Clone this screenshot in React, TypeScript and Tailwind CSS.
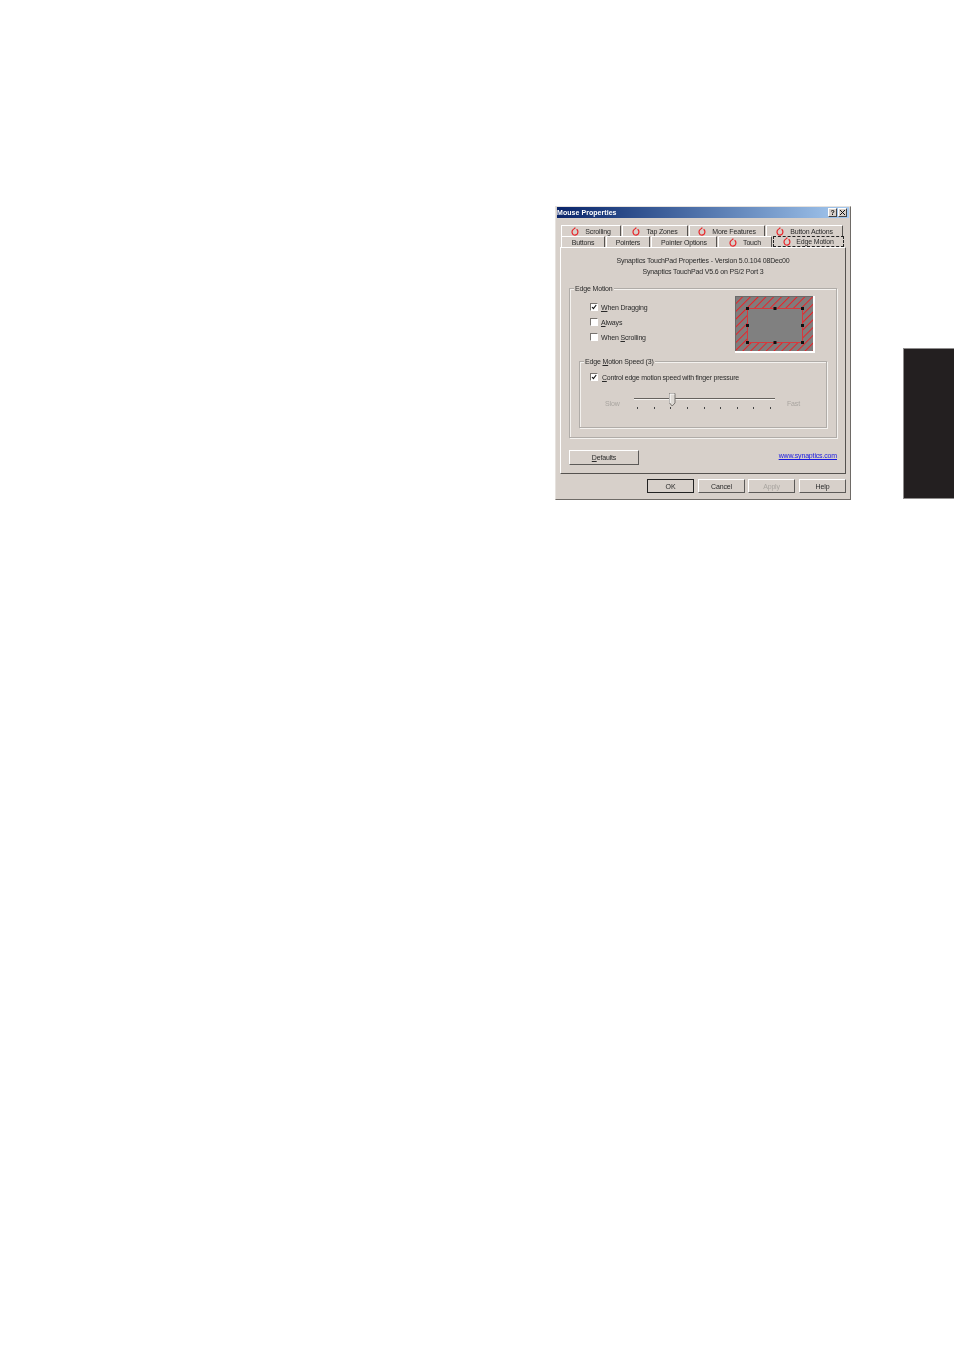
import { FC, ReactNode } from 'react'

const Swirl: FC = () => (
  <svg width="8" height="9" viewBox="0 0 8 9" fill="none" className="shrink-0">
    <path
      d="M4.4 0.7 C3.6 1.5 2.4 2.2 1.6 3.2 C0.6 4.6 1 6.8 2.4 7.7 C3.9 8.5 5.8 7.9 6.5 6.4 C7.2 4.9 6.8 3.3 5.6 2.3"
      stroke="#e8262a"
      strokeWidth="1.2"
    />
  </svg>
)

interface TabProps {
  className: string
  label: string
  icon?: boolean
}

const Tab: FC<TabProps> = ({ className, label, icon }) => (
  <div
    className={`flex h-[11px] items-center justify-center gap-[6px] rounded-t-[1px] border-t border-l border-r border-t-white border-l-white border-r-[#55524f] ${className}`}
  >
    {icon && <Swirl />}
    <span>{label}</span>
  </div>
)

const Check: FC<{ on?: boolean; children: ReactNode; className?: string }> = ({
  on,
  children,
  className,
}) => (
  <div className={`flex h-[8px] items-center gap-[3px] ${className ?? ''}`}>
    <div className="h-[8px] w-[8px] shrink-0 border border-t-[#77736f] border-l-[#77736f] border-r-white border-b-white bg-white">
      {on && (
        <svg viewBox="0 0 6 6" className="h-[6px] w-[6px]" fill="none">
          <path d="M1 3 L2.4 4.6 L5.2 1" stroke="#111" strokeWidth="1.1" />
        </svg>
      )}
    </div>
    <span>{children}</span>
  </div>
)

const Button: FC<{ className: string; children: ReactNode }> = ({
  className,
  children,
}) => (
  <div
    className={`flex items-center justify-center border border-t-white border-l-white border-r-[#5c5a58] border-b-[#5c5a58] ${className}`}
  >
    {children}
  </div>
)

const Group: FC<{
  className: string
  legend: ReactNode
  children: ReactNode
}> = ({ className, legend, children }) => (
  <div
    className={`relative border border-[#b0aca8] shadow-[1px_1px_0_#f4f2ef,inset_1px_1px_0_#f4f2ef] ${className}`}
  >
    <span className="absolute top-[-6px] left-[4px] h-[11px] bg-[#d7d0ca] px-[1px] leading-[11px]">
      {legend}
    </span>
    {children}
  </div>
)

const Preview: FC = () => (
  <svg width="80" height="57" viewBox="0 0 80 57" className="shrink-0">
    <defs>
      <pattern
        id="hatch"
        width="5.5"
        height="5.5"
        patternUnits="userSpaceOnUse"
        patternTransform="rotate(45)"
      >
        <rect width="5.5" height="5.5" fill="#807c7c" />
        <rect width="1" height="5.5" fill="#ec2026" />
      </pattern>
    </defs>
    <rect width="80" height="57" fill="#fff" />
    <rect width="78" height="55" fill="#6a6a6a" />
    <rect x="1" y="1" width="77" height="54" fill="url(#hatch)" />
    <rect x="12.5" y="12.5" width="55" height="34" fill="#808080" stroke="#d8383c" />
    {[12.5, 40, 67.5].map((x) =>
      [12.5, 29.5, 46.5].map((y) =>
        x === 40 && y === 29.5 ? null : (
          <rect key={`${x}-${y}`} x={x - 1.5} y={y - 1.5} width="3" height="3" fill="#111" />
        ),
      ),
    )}
  </svg>
)

const ticks = [0, 1, 2, 3, 4, 5, 6, 7, 8]

export default function App() {
  return (
    <div className="flex h-[1351px] w-[954px] items-start overflow-hidden bg-white pt-[206px] pl-[555px] font-['Liberation_Sans',Arial,sans-serif] text-[7px] leading-[11px] tracking-[-0.16px] text-[#2a2a2a]">
      <div className="h-[294px] w-[296px] shrink-0 border border-t-[#e6e2de] border-l-[#e6e2de] border-r-[#6e6a66] border-b-[#6e6a66] bg-[#d7d0ca] blur-[0.25px]">
        <div className="mx-[1px] flex h-[11px] items-center justify-between bg-gradient-to-r from-[#0a246a] to-[#a6caf0] pr-[2px] text-white">
          <span className="font-bold tracking-[0.05px]">Mouse Properties</span>
          <div className="flex gap-[1px] text-[#111]">
            <div className="flex h-[9px] w-[9px] items-center justify-center border border-t-white border-l-white border-r-[#444] border-b-[#444] bg-[#d7d0ca] text-[7px] font-bold">
              ?
            </div>
            <div className="flex h-[9px] w-[9px] items-center justify-center border border-t-white border-l-white border-r-[#444] border-b-[#444] bg-[#d7d0ca]">
              <svg width="5" height="5" viewBox="0 0 5 5" stroke="#111" strokeWidth="1">
                <path d="M0 0 L5 5 M5 0 L0 5" />
              </svg>
            </div>
          </div>
        </div>

        <div className="mt-[7px] ml-[5px] flex gap-[1px]">
          <Tab className="w-[60px]" icon label="Scrolling" />
          <Tab className="w-[66px]" icon label="Tap Zones" />
          <Tab className="w-[76px]" icon label="More Features" />
          <Tab className="w-[77px]" icon label="Button Actions" />
        </div>
        <div className="ml-[5px] flex items-end gap-[1px]">
          <Tab className="w-[44px]" label="Buttons" />
          <Tab className="w-[44px]" label="Pointers" />
          <Tab className="w-[66px]" label="Pointer Options" />
          <Tab className="w-[54px]" icon label="Touch" />
          <div className="mt-[-1px] flex h-[11px] w-[71px] items-center justify-center gap-[5px] border border-dashed border-[#222]">
            <Swirl />
            <span>Edge Motion</span>
          </div>
        </div>

        <div className="ml-[4px] h-[227px] w-[286px] border border-t-white border-l-white border-r-[#55524f] border-b-[#55524f] pt-[7px]">
          <p className="text-center">Synaptics TouchPad Properties - Version 5.0.104 08Dec00</p>
          <p className="text-center">Synaptics TouchPad V5.6 on PS/2 Port 3</p>

          <Group className="mt-[11px] ml-[8px] h-[150px] w-[268px]" legend="Edge Motion">
            <div className="flex items-start justify-between pt-[7px] pr-[21px] pl-[20px]">
              <div className="mt-[7px] flex flex-col gap-[7px]">
                <Check on>
                  <u>W</u>hen Dragging
                </Check>
                <Check>
                  <u>A</u>lways
                </Check>
                <Check>
                  When <u>S</u>crolling
                </Check>
              </div>
              <Preview />
            </div>

            <Group
              className="mt-[8px] ml-[9px] h-[67px] w-[248px]"
              legend={
                <>
                  Edge <u>M</u>otion Speed (3)
                </>
              }
            >
              <Check on className="mt-[11px] ml-[10px] !gap-[4px] tracking-[-0.22px]">
                <u>C</u>ontrol edge motion speed with finger pressure
              </Check>
              <div className="mt-[11px] flex items-start pl-[25px] text-[#a9a5a0]">
                <span className="mt-[6px] w-[29px]">Slow</span>
                <div className="relative h-[20px] w-[141px]">
                  <div className="mt-[6px] h-[2px] border-t border-t-[#66625e] bg-[#f4f2ef]" />
                  <div className="mt-[7px] mr-[4px] ml-[3px] flex justify-between">
                    {ticks.map((t) => (
                      <div key={t} className="h-[2px] w-[1px] bg-[#444]" />
                    ))}
                  </div>
                  <svg width="7" height="14" viewBox="0 0 7 14" className="absolute top-[1px] left-[35px]">
                    <path d="M0.5 0.5 H6 V10 L3.2 13 L0.5 10 Z" fill="#dedad5" stroke="#77736f" />
                    <path d="M1 1 H5.5 M1 1 V10" stroke="#fff" />
                  </svg>
                </div>
                <span className="mt-[6px] ml-[12px]">Fast</span>
              </div>
            </Group>
          </Group>

          <div className="mt-[12px] ml-[8px] flex w-[268px] items-start justify-between">
            <Button className="h-[15px] w-[70px]">
              <span>
                <u>D</u>efaults
              </span>
            </Button>
            <a className="text-[#1a1ae0] underline">www.synaptics.com</a>
          </div>
        </div>

        <div className="mt-[5px] ml-[91px] flex gap-[3px]">
          <Button className="h-[14px] w-[47px] !border-[#222]">OK</Button>
          <Button className="ml-[1px] h-[14px] w-[47px]">Cancel</Button>
          <Button className="h-[14px] w-[47px] text-[#a9a5a0]">Apply</Button>
          <Button className="ml-[1px] h-[14px] w-[47px]">Help</Button>
        </div>
      </div>

      <div className="mt-[142px] ml-[52px] h-[151px] w-[51px] shrink-0 border-t border-b border-l border-[#8f8d8d] bg-[#231f20]" />
    </div>
  )
}
